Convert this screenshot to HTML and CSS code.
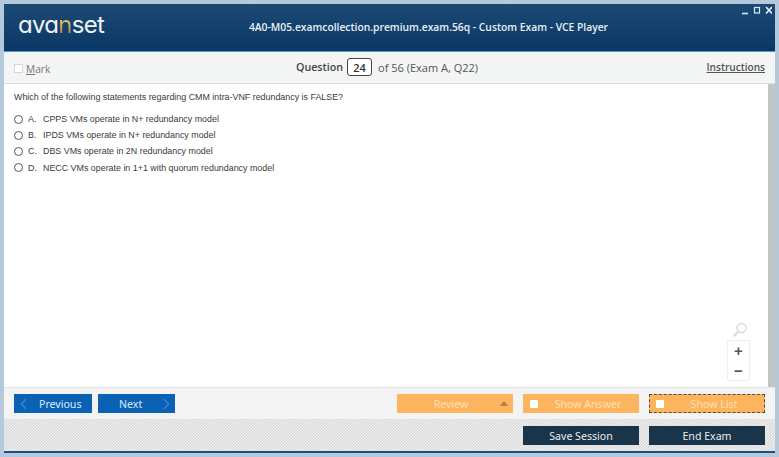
FILE: index.html
```html
<!DOCTYPE html>
<html lang="en">
<head>
<meta charset="utf-8">
<title>VCE Player</title>
<link rel="stylesheet" href="styles.css">
</head>
<body>
<div class="window">
  <header class="header">
    <div class="logo">ava<span class="logo-n">n</span>set</div>
    <h1 class="title">4A0-M05.examcollection.premium.exam.56q - Custom Exam - VCE Player</h1>
    <div class="win-controls">
      <svg width="30" height="9" viewBox="0 0 30 9">
        <path d="M0 7.5H6" stroke="#dfe8f0" stroke-width="1.6"/>
        <rect x="12.5" y="1.5" width="5" height="5.5" fill="none" stroke="#dfe8f0" stroke-width="1.2"/>
        <path d="M24 1L30 7.5M30 1L24 7.5" stroke="#eef3f7" stroke-width="1.6"/>
      </svg>
    </div>
  </header>
  <div class="toolbar">
    <label class="mark"><span class="mark-box"></span><span><u>M</u>ark</span></label>
    <div class="counter"><b class="q-label">Question</b><span class="q-num">24</span><span class="q-of">of 56 (Exam A, Q22)</span></div>
    <a class="instructions">Instructions</a>
  </div>
  <div class="body-row">
    <main class="content">
      <p class="question">Which of the following statements regarding CMM intra-VNF redundancy is FALSE?</p>
      <ul class="options">
        <li class="option"><span class="radio"></span><span class="letter">A.</span><span>CPPS VMs operate in N+ redundancy model</span></li>
        <li class="option"><span class="radio"></span><span class="letter">B.</span><span>IPDS VMs operate in N+ redundancy model</span></li>
        <li class="option"><span class="radio"></span><span class="letter">C.</span><span>DBS VMs operate in 2N redundancy model</span></li>
        <li class="option"><span class="radio"></span><span class="letter">D.</span><span>NECC VMs operate in 1+1 with quorum redundancy model</span></li>
      </ul>
      <div class="zoom">
        <svg class="zoom-icon" width="16" height="16" viewBox="0 0 16 16">
          <circle cx="9.5" cy="6" r="4.5" fill="none" stroke="#d9d9d9" stroke-width="1.4"/>
          <path d="M6.2 9.4L1.5 14.5" stroke="#d9d9d9" stroke-width="2"/>
        </svg>
        <div class="zoom-box">
          <span class="zoom-btn">+</span>
          <span class="zoom-btn">−</span>
        </div>
      </div>
    </main>
    <div class="scrollbar"></div>
  </div>
  <div class="nav-row">
    <div class="nav-left">
      <button class="btn btn-blue btn-prev"><svg class="chev" width="7" height="12" viewBox="0 0 7 12"><path d="M6 1L1.5 6L6 11" fill="none" stroke="#2a86dc" stroke-width="1.6"/></svg><span>Previous</span></button>
      <button class="btn btn-blue btn-next"><span>Next</span><svg class="chev" width="7" height="12" viewBox="0 0 7 12"><path d="M1 1L5.5 6L1 11" fill="none" stroke="#2a86dc" stroke-width="1.6"/></svg></button>
    </div>
    <div class="nav-right">
      <button class="btn btn-orange btn-review"><span>Review</span><i class="tri"></i></button>
      <button class="btn btn-orange btn-check"><i class="check"></i><span>Show Answer</span></button>
      <button class="btn btn-orange btn-check btn-focus"><i class="check"></i><span>Show List</span></button>
    </div>
  </div>
  <div class="action-row">
    <button class="btn btn-dark">Save Session</button>
    <button class="btn btn-dark">End Exam</button>
  </div>
</div>
</body>
</html>
```
FILE: styles.css
```css
* { box-sizing: border-box; }
html, body { margin: 0; height: 100%; }
body {
  background: #b4c9dc;
  overflow: hidden;
  font-family: "Liberation Sans", Arial, sans-serif;
}
.window {
  width: 771px;
  height: 449px;
  margin: 4px 0 0 4px;
  display: flex;
  flex-direction: column;
  background: #fff;
  border-bottom: 2px solid #1d4f7c;
}
.header {
  height: 48px;
  flex: none;
  position: relative;
  display: flex;
  align-items: center;
  justify-content: center;
  background: linear-gradient(#1c4a75, #0a3764);
  border-bottom: 1px solid #4f9ac8;
}
.logo {
  position: absolute;
  left: 14px;
  top: 6px;
  font-family: "Inter", sans-serif;
  font-feature-settings: "cv11" 1;
  font-size: 24px;
  line-height: 29px;
  font-weight: 400;
  letter-spacing: -0.7px;
  color: #eef3f7;
}
.logo-n {
  background: linear-gradient(#e7b765 40%, #8a6a3c);
  -webkit-background-clip: text;
  background-clip: text;
  color: transparent;
}
.title {
  margin: 0 0 2px 78px;
  font-family: "Open Sans", sans-serif;
  font-size: 10.3px;
  font-weight: 600;
  color: #eaf0f5;
}
.win-controls { position: absolute; top: 2px; right: 3px; line-height: 0; }
.toolbar {
  height: 32px;
  flex: none;
  position: relative;
  display: flex;
  align-items: center;
  justify-content: space-between;
  padding: 0 10px;
  background: #f3f4f4;
  border-bottom: 1px solid #dcdcdc;
}
.mark {
  display: flex;
  align-items: center;
  gap: 3px;
  margin-top: 3px;
  font-family: "Open Sans", sans-serif;
  font-size: 10.2px;
  color: #777;
}
.mark-box {
  width: 9px;
  height: 9px;
  margin-top: -2px;
  background: #fff;
  border: 1px solid #d5d5d5;
}
.counter {
  position: absolute;
  left: 292px;
  top: 6px;
  display: flex;
  align-items: center;
  gap: 4px;
  font-family: "Open Sans", sans-serif;
  font-size: 11px;
  color: #555;
}
.q-label { color: #444; font-weight: 600; font-size: 10.7px; }
.q-num {
  width: 25px;
  height: 18px;
  display: flex;
  align-items: center;
  justify-content: center;
  border: 1px solid #444;
  border-radius: 3px;
  background: #fff;
  color: #333;
  font-weight: 600;
}
.q-of { margin-left: 2px; }
.instructions {
  font-family: "Open Sans", sans-serif;
  font-size: 10.1px;
  font-weight: 600;
  color: #555;
  text-decoration: underline;
  margin-top: -1px;
}
.body-row { flex: 1; display: flex; min-height: 0; }
.content {
  flex: 1;
  position: relative;
  padding: 7px 10px;
  font-size: 8.9px;
  color: #3a3a3a;
  background: #fff;
}
.question { margin: 0 0 8px; line-height: 12px; }
.options { list-style: none; margin: 0; padding: 0; }
.option {
  height: 16.2px;
  display: flex;
  align-items: center;
}
.radio {
  width: 9px;
  height: 9px;
  margin-right: 5px;
  border: 1px solid #555;
  border-radius: 50%;
  background: #fff;
}
.letter { width: 15px; }
.zoom {
  position: absolute;
  right: 18px;
  bottom: 6px;
  display: flex;
  flex-direction: column;
  align-items: center;
}
.zoom-icon { margin-bottom: 2px; margin-left: 2px; }
.zoom-box {
  width: 23px;
  height: 41px;
  display: flex;
  flex-direction: column;
  border: 1px solid #eee;
  border-radius: 2px;
}
.zoom-btn {
  flex: 1;
  display: flex;
  align-items: center;
  justify-content: center;
  font-size: 15px;
  font-weight: bold;
  color: #555;
}
.scrollbar { width: 7px; flex: none; background: #c4c6c6; }
.nav-row {
  height: 32px;
  flex: none;
  display: flex;
  align-items: flex-start;
  justify-content: space-between;
  padding: 6px 10px 0;
  background: #f3f3f3;
  border-top: 1px solid #e2e2e2;
}
.nav-left, .nav-right { display: flex; }
.nav-left { gap: 6px; }
.nav-right { gap: 10px; }
.btn {
  height: 19px;
  margin: 0;
  padding: 0;
  border: 0;
  display: flex;
  align-items: center;
  font-family: "Noto Sans", sans-serif;
  font-size: 10.6px;
}
.btn-blue { width: 78px; background: #0b62b4; color: #dcecf8; }
.btn-prev { padding-left: 6px; gap: 12px; }
.btn-next { padding-left: 21px; gap: 21px; width: 77px; }
.btn-orange { width: 116px; background: #fdb45e; color: #ffe0b0; position: relative; }
.btn-review { justify-content: center; padding-right: 8px; }
.tri {
  position: absolute;
  right: 5px;
  top: 7px;
  border: 4px solid transparent;
  border-top: 0;
  border-bottom: 5px solid #b9803a;
}
.btn-check { justify-content: center; padding-left: 14px; }
.btn-focus { outline: 1px dashed #5d4a2c; outline-offset: -1px; }
.check {
  position: absolute;
  left: 7px;
  top: 6px;
  width: 8px;
  height: 8px;
  background: #fff;
}
.action-row {
  height: 32px;
  flex: none;
  display: flex;
  align-items: flex-start;
  justify-content: flex-end;
  gap: 10px;
  padding: 7px 10px 0;
  background: repeating-linear-gradient(135deg, #dcdcdc 0, #dcdcdc 1.06px, #f4f4f4 1.06px, #f4f4f4 2.121px);
}
.btn-dark {
  width: 116px;
  justify-content: center;
  background: #1a3449;
  color: #e8edf1;
}
```
